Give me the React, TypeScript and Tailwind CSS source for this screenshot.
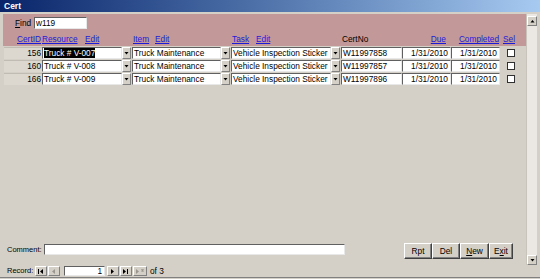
import React from "react";

const sunken =
  "bg-white border border-t-[#606060] border-l-[#606060] border-r-[#e8e8e8] border-b-[#e8e8e8]";
const raised =
  "bg-[#d4d0c8] border border-t-white border-l-white border-r-[#404040] border-b-[#404040] shadow-[inset_-1px_-1px_0_#808080]";
const raisedSmall =
  "bg-[#d4d0c8] border border-t-white border-l-white border-r-[#808080] border-b-[#808080]";
const link = "text-[#1c1cd8] underline";

function DropBtn() {
  return (
    <div className={`${raisedSmall} w-[9px] h-full flex items-center justify-center`}>
      <svg width="5" height="3" viewBox="0 0 5 3">
        <path d="M0.5 0h4L2.5 2.5z" fill="#000" />
      </svg>
    </div>
  );
}

function Combo({ boxW, text, selected }: { boxW: string; text: string; selected?: boolean }) {
  return (
    <div className="flex h-full">
      <div className={`${sunken} ${boxW} h-full flex items-center pl-[1px] overflow-hidden whitespace-nowrap`}>
        {selected ? <span className="bg-black text-white leading-[10px]">{text}</span> : text}
      </div>
      <DropBtn />
    </div>
  );
}

const rows = [
  { id: "156", res: "Truck # V-007", cert: "W11997858", sel: true },
  { id: "160", res: "Truck # V-008", cert: "W11997857" },
  { id: "166", res: "Truck # V-009", cert: "W11997896" },
];

function NavBtn({ children, w = "w-[12px]" }: { children: React.ReactNode; w?: string }) {
  return <div className={`${raisedSmall} ${w} h-[10px] flex items-center justify-center`}>{children}</div>;
}

export default function App() {
  return (
    <div className="w-[540px] h-[279px] bg-[#d4d0c8] flex flex-col overflow-hidden text-[8.3px] text-black font-['Liberation_Sans',Arial,sans-serif] leading-none">
      {/* title bar */}
      <div className="h-[12px] bg-linear-to-r from-[#0a246a] to-[#a6caf0] flex items-center pl-[4px]">
        <span className="text-white font-bold text-[8.5px]">Cert</span>
      </div>
      <div className="h-[2px] bg-[#d4d0c8]" />
      {/* body */}
      <div className="flex h-[251px] px-[3px]">
        <div className="w-[523px] flex flex-col">
          {/* header */}
          <div className="h-[32px] bg-[#c29898] flex flex-col">
            <div className="flex items-center mt-[3px] h-[12px]">
              <span className="ml-[12px] w-[19px]">
                <u>F</u>ind
              </span>
              <div className={`${sunken} w-[53px] h-[12px] flex items-center pl-[1px]`}>w119</div>
            </div>
            <div className="flex items-center mt-[6px] h-[9px] whitespace-nowrap">
              <div className="ml-[1px] w-[38px] text-right pr-[1px]">
                <span className={link}>CertID</span>
              </div>
              <div className="w-[90px] flex">
                <span className={`${link} w-[43px]`}>Resource</span>
                <span className={link}>Edit</span>
              </div>
              <div className="w-[99px] flex">
                <span className={`${link} ml-[1px] w-[22px]`}>Item</span>
                <span className={link}>Edit</span>
              </div>
              <div className="w-[110px] flex">
                <span className={`${link} ml-[1px] w-[24px]`}>Task</span>
                <span className={link}>Edit</span>
              </div>
              <div className="w-[61px] pl-[1px]">CertNo</div>
              <div className="w-[49px] text-right pr-[5px]">
                <span className={link}>Due</span>
              </div>
              <div className="w-[49px] text-right pr-[1px]">
                <span className={link}>Completed</span>
              </div>
              <div className="pl-[3px]">
                <span className={link}>Sel</span>
              </div>
            </div>
          </div>
          {/* detail */}
          <div className="flex flex-col gap-[1px] pt-[1px] whitespace-nowrap">
            {rows.map((r) => (
              <div key={r.id} className="flex h-[12px]">
                <div className="ml-[1px] w-[38px] h-full bg-[#dcd8d0] border-t border-[#c0bcb4] flex items-center justify-end pr-[1px]">
                  {r.id}
                </div>
                <div className="w-[90px] h-full">
                  <Combo boxW="w-[80px]" text={r.res} selected={r.sel} />
                </div>
                <div className="w-[99px] h-full">
                  <Combo boxW="w-[89px]" text="Truck Maintenance" />
                </div>
                <div className="w-[110px] h-full">
                  <Combo boxW="w-[100px]" text="Vehicle Inspection Sticker" />
                </div>
                <div className={`${sunken} w-[61px] h-full flex items-center pl-[1px]`}>{r.cert}</div>
                <div className={`${sunken} w-[49px] h-full flex items-center justify-end pr-[2px]`}>1/31/2010</div>
                <div className={`${sunken} w-[49px] h-full flex items-center justify-end pr-[2px]`}>1/31/2010</div>
                <div className="ml-[7px] h-full flex items-center">
                  <div className="w-[8px] h-[8px] bg-white border border-[#303030]" />
                </div>
              </div>
            ))}
          </div>
          <div className="flex-1" />
          {/* footer */}
          <div className="flex items-start mb-[6px]">
            <div className="flex items-center mt-[1px] h-[11px]">
              <span className="ml-[4px] w-[37px] text-[7.5px] whitespace-nowrap">Comment:</span>
              <div className={`${sunken} w-[301px] h-[11px]`} />
            </div>
            <div className="ml-[59px] flex">
              <div className={`${raised} w-[28px] h-[16px] flex items-center justify-center`}>Rpt</div>
              <div className={`${raised} w-[28px] h-[16px] flex items-center justify-center`}>Del</div>
              <div className={`${raised} w-[29px] h-[16px] flex items-center justify-center`}>
                <span>
                  <u>N</u>ew
                </span>
              </div>
              <div className={`${raised} w-[24px] h-[16px] flex items-center justify-center`}>
                <span>
                  E<u>x</u>it
                </span>
              </div>
            </div>
          </div>
        </div>
        {/* scrollbar */}
        <div className="w-[11px] flex flex-col bg-[#ebe8e4] border-l border-[#c8c4bc]">
          <div className={`${raisedSmall} h-[10px] mt-[2px] flex items-center justify-center`}>
            <svg width="5" height="3" viewBox="0 0 5 3">
              <path d="M0.5 2.5h4L2.5 0z" fill="#000" />
            </svg>
          </div>
          <div className="flex-1" />
          <div className={`${raisedSmall} h-[10px] flex items-center justify-center`}>
            <svg width="5" height="3" viewBox="0 0 5 3">
              <path d="M0.5 0h4L2.5 2.5z" fill="#000" />
            </svg>
          </div>
        </div>
      </div>
      {/* record nav */}
      <div className="h-[12px] px-[3px] flex items-center whitespace-nowrap">
        <span className="ml-[4px] w-[28px] text-[7.5px]">Record:</span>
        <NavBtn>
          <svg width="6" height="5" viewBox="0 0 6 5">
            <rect x="0" y="0" width="1" height="5" fill="#000" />
            <path d="M5 0L2 2.5L5 5z" fill="#000" />
          </svg>
        </NavBtn>
        <div className="ml-[1px]">
          <NavBtn>
            <svg width="4" height="5" viewBox="0 0 4 5">
              <path d="M3 0L0 2.5L3 5z" fill="#9a968e" />
            </svg>
          </NavBtn>
        </div>
        <div className={`${sunken} ml-[4px] w-[41px] h-[10px] flex items-center justify-end pr-[2px]`}>1</div>
        <div className="ml-[2px]">
          <NavBtn>
            <svg width="4" height="5" viewBox="0 0 4 5">
              <path d="M0 0L3 2.5L0 5z" fill="#000" />
            </svg>
          </NavBtn>
        </div>
        <div className="ml-[1px]">
          <NavBtn>
            <svg width="6" height="5" viewBox="0 0 6 5">
              <path d="M0 0L3 2.5L0 5z" fill="#000" />
              <rect x="4" y="0" width="1" height="5" fill="#000" />
            </svg>
          </NavBtn>
        </div>
        <div className="ml-[1px]">
          <NavBtn w="w-[14px]">
            <svg width="8" height="5" viewBox="0 0 8 5">
              <path d="M0 0L3 2.5L0 5z" fill="#9a968e" />
              <path d="M5 1h3M6.5 0v3M5.3 0.3l2.4 2.4M7.7 0.3l-2.4 2.4" stroke="#9a968e" strokeWidth="0.7" />
            </svg>
          </NavBtn>
        </div>
        <span className="ml-[3px]">of 3</span>
      </div>
      <div className="flex-1 border-t border-[#808080]" />
    </div>
  );
}
